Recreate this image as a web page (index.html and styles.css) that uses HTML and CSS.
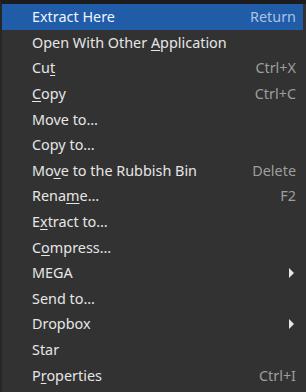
FILE: index.html
```html
<!DOCTYPE html>
<html lang="en">

<head>
    <meta charset="UTF-8" />
    <link rel="stylesheet" href="styles.css">
    <title>Context menu</title>
</head>

<body>
    <ul class="menu">
        <li class="item active"><span class="label">Extract Here</span><span class="key">Return</span></li>
        <li class="item"><span class="label">Open With Other <u>A</u>pplication</span></li>
        <li class="item"><span class="label">Cu<u>t</u></span><span class="key">Ctrl+X</span></li>
        <li class="item"><span class="label"><u>C</u>opy</span><span class="key">Ctrl+C</span></li>
        <li class="item"><span class="label">Move to…</span></li>
        <li class="item"><span class="label">Copy to…</span></li>
        <li class="item"><span class="label">Mo<u>v</u>e to the Rubbish Bin</span><span class="key">Delete</span></li>
        <li class="item"><span class="label">Rena<u>m</u>e…</span><span class="key">F2</span></li>
        <li class="item"><span class="label">E<u>x</u>tract to…</span></li>
        <li class="item"><span class="label">C<u>o</u>mpress…</span></li>
        <li class="item"><span class="label">MEGA</span><span class="arrow"></span></li>
        <li class="item"><span class="label">Send to…</span></li>
        <li class="item"><span class="label">Dropbox</span><span class="arrow"></span></li>
        <li class="item"><span class="label">Star</span></li>
        <li class="item"><span class="label">P<u>r</u>operties</span><span class="key">Ctrl+I</span></li>
    </ul>
</body>

</html>
```

FILE: styles.css
```css
* {
    margin: 0;
    padding: 0;
    box-sizing: border-box;
}

body {
    background: #1e1e1e;
    font-family: 'Noto Sans', 'DejaVu Sans', sans-serif;
    font-size: 14.4px;
}

.menu {
    list-style: none;
    width: 306px;
    height: 392px;
    background: #323232;
    border-top: 4px solid #1d1d1f;
    border-left: 2px solid #262626;
    padding: 0 3px 0 0;
}

.item {
    display: flex;
    align-items: center;
    height: 25.6px;
    padding: 0 7px 0 30px;
    color: #e6e6e6;
}

.item u {
    text-decoration-thickness: 1px;
    text-underline-offset: 2px;
}

.label {
    flex: 1;
}

.key {
    color: #9e9e9e;
}

.active {
    background: #215ca8;
    color: #eef4fc;
}

.active .key {
    color: #a9c3e4;
}

.arrow {
    width: 0;
    height: 0;
    border-top: 5px solid transparent;
    border-bottom: 5px solid transparent;
    border-left: 5px solid #e6e6e6;
    margin-right: 2px;
}
```
